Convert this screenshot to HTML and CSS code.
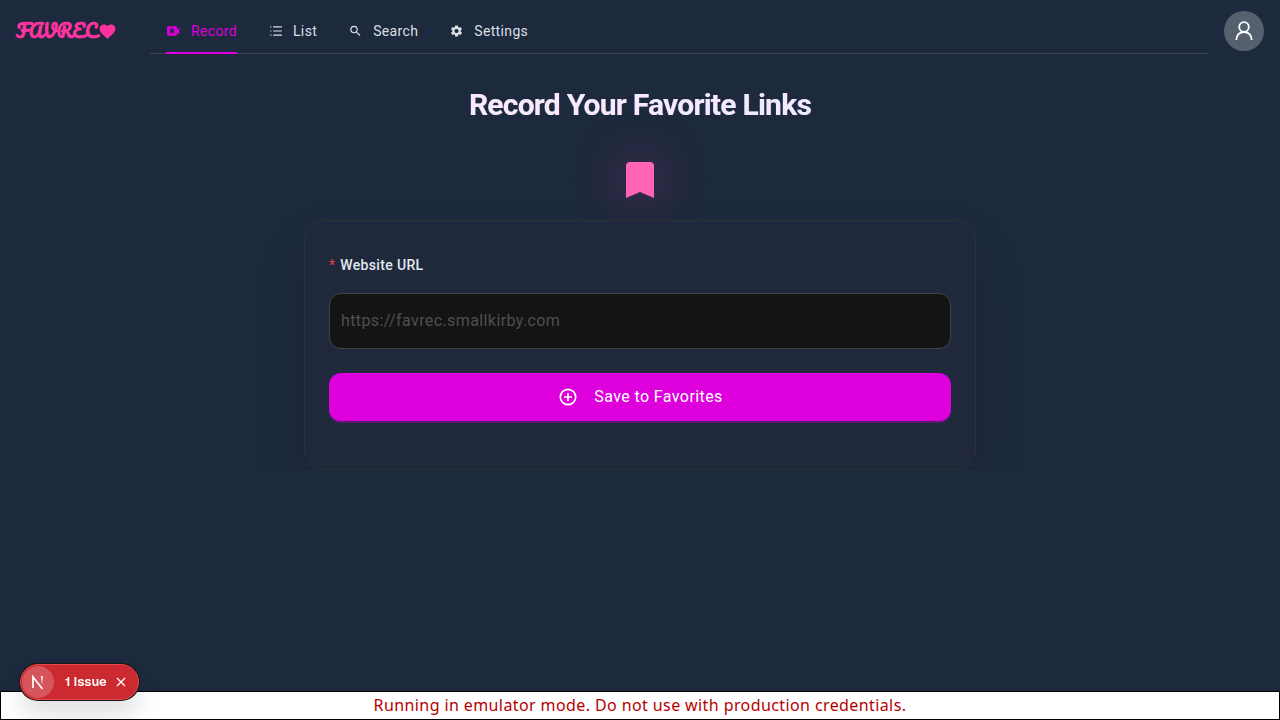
FILE: index.html
```html
<!DOCTYPE html>
<html lang="en">
<head>
<meta charset="utf-8">
<meta name="viewport" content="width=device-width, initial-scale=1">
<title>FavRec</title>
<link rel="stylesheet" href="styles.css">
</head>
<body>
<header class="header">
  <a class="logo" href="#">
    <span class="logo-text">FAVREC</span>
    <svg class="logo-heart" viewBox="0 0 24 24" fill="currentColor" aria-hidden="true"><path d="M12 21.35l-1.45-1.32C5.4 15.36 2 12.28 2 8.5 2 5.42 4.42 3 7.5 3c1.74 0 3.41.81 4.5 2.09C13.09 3.81 14.76 3 16.5 3 19.58 3 22 5.42 22 8.5c0 3.78-3.4 6.86-8.55 11.54z"/></svg>
  </a>
  <nav class="nav">
    <a class="nav-link nav-link-active" href="#record">
      <svg class="nav-icon" viewBox="0 0 24 24" fill="currentColor" aria-hidden="true"><path fill-rule="evenodd" d="M3 4h13c1.100 0 2 .9 2 2v4l4-4v12l-4-4v4c0 1.100-.9 2-2 2H3c-1.100 0-2-.9-2-2V6c0-1.100.9-2 2-2zM8.600 7v3.200L5.900 8.600l-.9 1.500L7.800 12 5 13.900l.9 1.500 2.700-1.600V17h1.800v-3.200l2.700 1.600.9-1.500-2.800-1.900 2.800-1.900-.9-1.500-2.700 1.600V7z"/></svg>
      <span>Record</span>
    </a>
    <a class="nav-link" href="#list">
      <svg class="nav-icon" viewBox="0 0 24 24" fill="currentColor" aria-hidden="true"><path d="M8 4h15v2H8zM8 11h15v2H8zM8 18h15v2H8zM3 4h2v2H3zM3 11h2v2H3zM3 18h2v2H3z"/></svg>
      <span>List</span>
    </a>
    <a class="nav-link" href="#search">
      <svg class="nav-icon" viewBox="0 0 24 24" fill="currentColor" aria-hidden="true"><path d="M15.500 14h-.79l-.28-.27A6.471 6.471 0 0 0 16 9.500 6.500 6.500 0 1 0 9.500 16c1.610 0 3.090-.59 4.230-1.570l.27.28v.79l5 4.990L20.490 19l-4.990-5zm-6 0C7.010 14 5 11.990 5 9.500S7.010 5 9.500 5 14 7.010 14 9.500 11.990 14 9.500 14z"/></svg>
      <span>Search</span>
    </a>
    <a class="nav-link" href="#settings">
      <svg class="nav-icon" viewBox="0 0 24 24" fill="currentColor" aria-hidden="true"><path d="M19.140 12.940c.04-.3.060-.61.060-.94 0-.32-.02-.64-.07-.94l2.030-1.580c.18-.14.230-.41.120-.61l-1.920-3.320c-.12-.22-.37-.29-.59-.22l-2.390.96c-.5-.38-1.030-.7-1.620-.94l-.36-2.540c-.04-.24-.24-.41-.48-.41h-3.840c-.24 0-.43.17-.47.41l-.36 2.540c-.59.24-1.130.57-1.620.94l-2.390-.96c-.22-.08-.47 0-.59.22L2.740 8.870c-.12.21-.08.47.12.61l2.030 1.580c-.05.3-.09.63-.09.94s.02.64.07.94l-2.030 1.580c-.18.14-.23.41-.12.61l1.920 3.320c.12.22.37.29.59.22l2.390-.96c.5.38 1.030.7 1.620.94l.36 2.540c.05.24.24.41.48.41h3.840c.24 0 .44-.17.470-.41l.36-2.540c.59-.24 1.130-.56 1.620-.94l2.390.96c.22.080.47 0 .59-.22l1.920-3.320c.12-.22.070-.47-.12-.61zM12 15.600A3.600 3.600 0 1 1 12 8.400a3.600 3.600 0 0 1 0 7.200z"/></svg>
      <span>Settings</span>
    </a>
  </nav>
  <button class="avatar" type="button" aria-label="Account">
    <svg class="avatar-icon" viewBox="0 0 20 20" fill="none" stroke="currentColor" stroke-width="1.800" aria-hidden="true"><circle cx="10" cy="6" r="4.800"/><path d="M2.300 19c0-4.800 3.300-8 7.700-8s7.700 3.200 7.700 8"/></svg>
  </button>
</header>
<main class="main">
  <h1 class="title">Record Your Favorite Links</h1>
  <svg class="bookmark" viewBox="0 0 28 36" fill="currentColor" aria-hidden="true"><path d="M4 0h20a4 4 0 0 1 4 4v32l-14-6-14 6V4a4 4 0 0 1 4-4z"/></svg>
  <div class="card-area">
    <form class="card">
      <label class="label" for="url"><span class="required">*</span> Website URL</label>
      <input class="input" id="url" type="url" placeholder="https://favrec.smallkirby.com" required>
      <button class="save" type="button">
        <svg class="save-icon" viewBox="0 0 18 18" fill="none" stroke="currentColor" stroke-width="1.700" aria-hidden="true"><circle cx="9" cy="9" r="7.700"/><path d="M9 5v8M5 9h8"/></svg>
        <span class="save-text">Save to Favorites</span>
      </button>
    </form>
  </div>
</main>
<p class="emulator">Running in emulator mode. Do not use with production credentials.</p>
<aside class="issues">
  <span class="issues-mark">
    <svg class="issues-logo" viewBox="0 0 16 16" fill="none" stroke-width="1.700" aria-hidden="true"><defs><linearGradient id="fade" x1="0" y1="0" x2="0" y2="1"><stop offset="0" stop-color="#fff"/><stop offset="1" stop-color="#fff" stop-opacity="0"/></linearGradient></defs><path stroke="#fff" d="M3 14V3l9.500 12"/><path fill="url(#fade)" d="M11 2h1.800v9H11z"/></svg>
  </span>
  <button class="issues-open" type="button">1 Issue</button>
  <button class="issues-close" type="button" aria-label="Hide issues"><svg class="issues-x" viewBox="0 0 10 10" fill="none" stroke="currentColor" stroke-width="1.300" aria-hidden="true"><path d="M1 1l8 8M9 1L1 9"/></svg></button>
</aside>
</body>
</html>
```
FILE: styles.css
```css
* { box-sizing: border-box; }

body {
  margin: 0;
  min-height: 100vh;
  background: #1d293d;
  color: #e2e8f0;
  font-family: Roboto, "Noto Sans", sans-serif;
  font-size: 16px;
}

button, input { font: inherit; }
button { border: 0; cursor: pointer; }

.header {
  display: flex;
  align-items: flex-start;
  padding: 8px 16px 0;
}

.logo {
  display: flex;
  align-items: center;
  gap: 1px;
  width: 134px;
  height: 46px;
  color: #ff339f;
  text-decoration: none;
}

.logo-text {
  font-family: Pacifico, Lobster, cursive;
  font-size: 18px;
  font-weight: 700;
  line-height: 24px;
}

.logo-heart { width: 19px; height: 19px; }

.nav {
  display: flex;
  flex: 1;
  gap: 31px;
  height: 46px;
  margin-right: 16px;
  padding: 0 16px;
  border-bottom: 1px solid #3b4556;
}

.nav-link {
  display: flex;
  align-items: center;
  gap: 10px;
  height: 46px;
  padding-top: 2px;
  border-bottom: 2px solid transparent;
  color: #dcdfe4;
  font-size: 14px;
  letter-spacing: 0.025em;
  text-decoration: none;
}

.nav-link-active {
  border-bottom-color: #dd00dd;
  color: #dd00dd;
}

.nav-icon { width: 15px; height: 14px; }

.avatar {
  display: grid;
  place-items: center;
  width: 40px;
  height: 40px;
  margin-top: 3px;
  padding: 0;
  border-radius: 50%;
  background: #566170;
  color: #fff;
}

.avatar-icon { width: 20px; height: 20px; }

.main {
  display: flex;
  flex-direction: column;
  align-items: center;
  padding: 32px 16px 0;
}

.title {
  width: 100%;
  max-width: 672px;
  margin: 0 0 38px;
  background: linear-gradient(to right, #fce7f3, #f3e8ff, #e0e7ff);
  background-clip: text;
  -webkit-background-clip: text;
  color: rgb(248 236 255 / 50%);
  font-size: 30px;
  font-weight: 700;
  line-height: 38px;
  letter-spacing: -0.025em;
  text-align: center;
}

.bookmark {
  width: 28px;
  height: 36px;
  margin-bottom: 22px;
  color: #ff64b5;
  filter: drop-shadow(0 0 25px rgb(246 51 154 / 40%));
}

/* Keeps the card's shadow from spilling below the form. */
.card-area {
  width: 100%;
  max-width: 672px;
  clip-path: inset(-50px -60px 0);
}

.card {
  display: flex;
  flex-direction: column;
  padding: 32px 24px 48px;
  border: 1px solid #303030;
  border-radius: 20px;
  background: #20283b;
  box-shadow: 0 25px 50px rgb(0 0 0 / 12%);
}

.label {
  margin-bottom: 16px;
  color: #e2e8f0;
  font-size: 14px;
  font-weight: 500;
  line-height: 24px;
  letter-spacing: 0.025em;
}

.required {
  margin-right: 1px;
  color: #dc4446;
  font-weight: 400;
}

.input {
  height: 56px;
  padding: 0 11px 2px;
  border: 1px solid #424242;
  border-radius: 12px;
  background: #141414;
  color: #fff;
  letter-spacing: 0.025em;
}

.input::placeholder { color: #4f4f4f; }

.save {
  display: flex;
  align-items: center;
  justify-content: center;
  gap: 17px;
  height: 48px;
  margin-top: 24px;
  padding: 0 6px 0 8px;
  border-radius: 12px;
  background: #dd00dd;
  box-shadow: 0 2px 0 #5a1a72;
  color: #fff;
  letter-spacing: 0.025em;
}

.save-icon { width: 18px; height: 18px; }

.save-text { padding-bottom: 2px; }

.emulator {
  position: fixed;
  bottom: 0;
  left: 0;
  width: 100%;
  margin: 0;
  border: 1px solid #000;
  background: #fff;
  color: #b50000;
  font-family: "Noto Sans", sans-serif;
  line-height: 27px;
  letter-spacing: 0.025em;
  text-align: center;
}

.issues {
  position: fixed;
  bottom: 20px;
  left: 20px;
  display: flex;
  align-items: center;
  height: 36px;
  padding: 0 8px 0 1px;
  border: 1px solid #e5484d;
  border-radius: 18px;
  background: #ca2a30;
  box-shadow: 0 0 0 1px #171717, 0 16px 24px rgb(0 0 0 / 12%);
  color: #fff;
  font-family: Geist, Inter, sans-serif;
  font-size: 13px;
  font-weight: 600;
}

.issues-mark {
  display: grid;
  place-items: center;
  width: 32px;
  height: 32px;
  border-radius: 50%;
  background: #d5555a;
}

.issues-logo { width: 16px; height: 16px; }

.issues-open {
  padding: 0 5px 2px 11px;
  background: none;
  color: inherit;
}

.issues-close {
  display: grid;
  place-items: center;
  width: 18px;
  height: 18px;
  padding: 0;
  background: none;
  color: inherit;
}

.issues-x { width: 10px; height: 10px; }
```
